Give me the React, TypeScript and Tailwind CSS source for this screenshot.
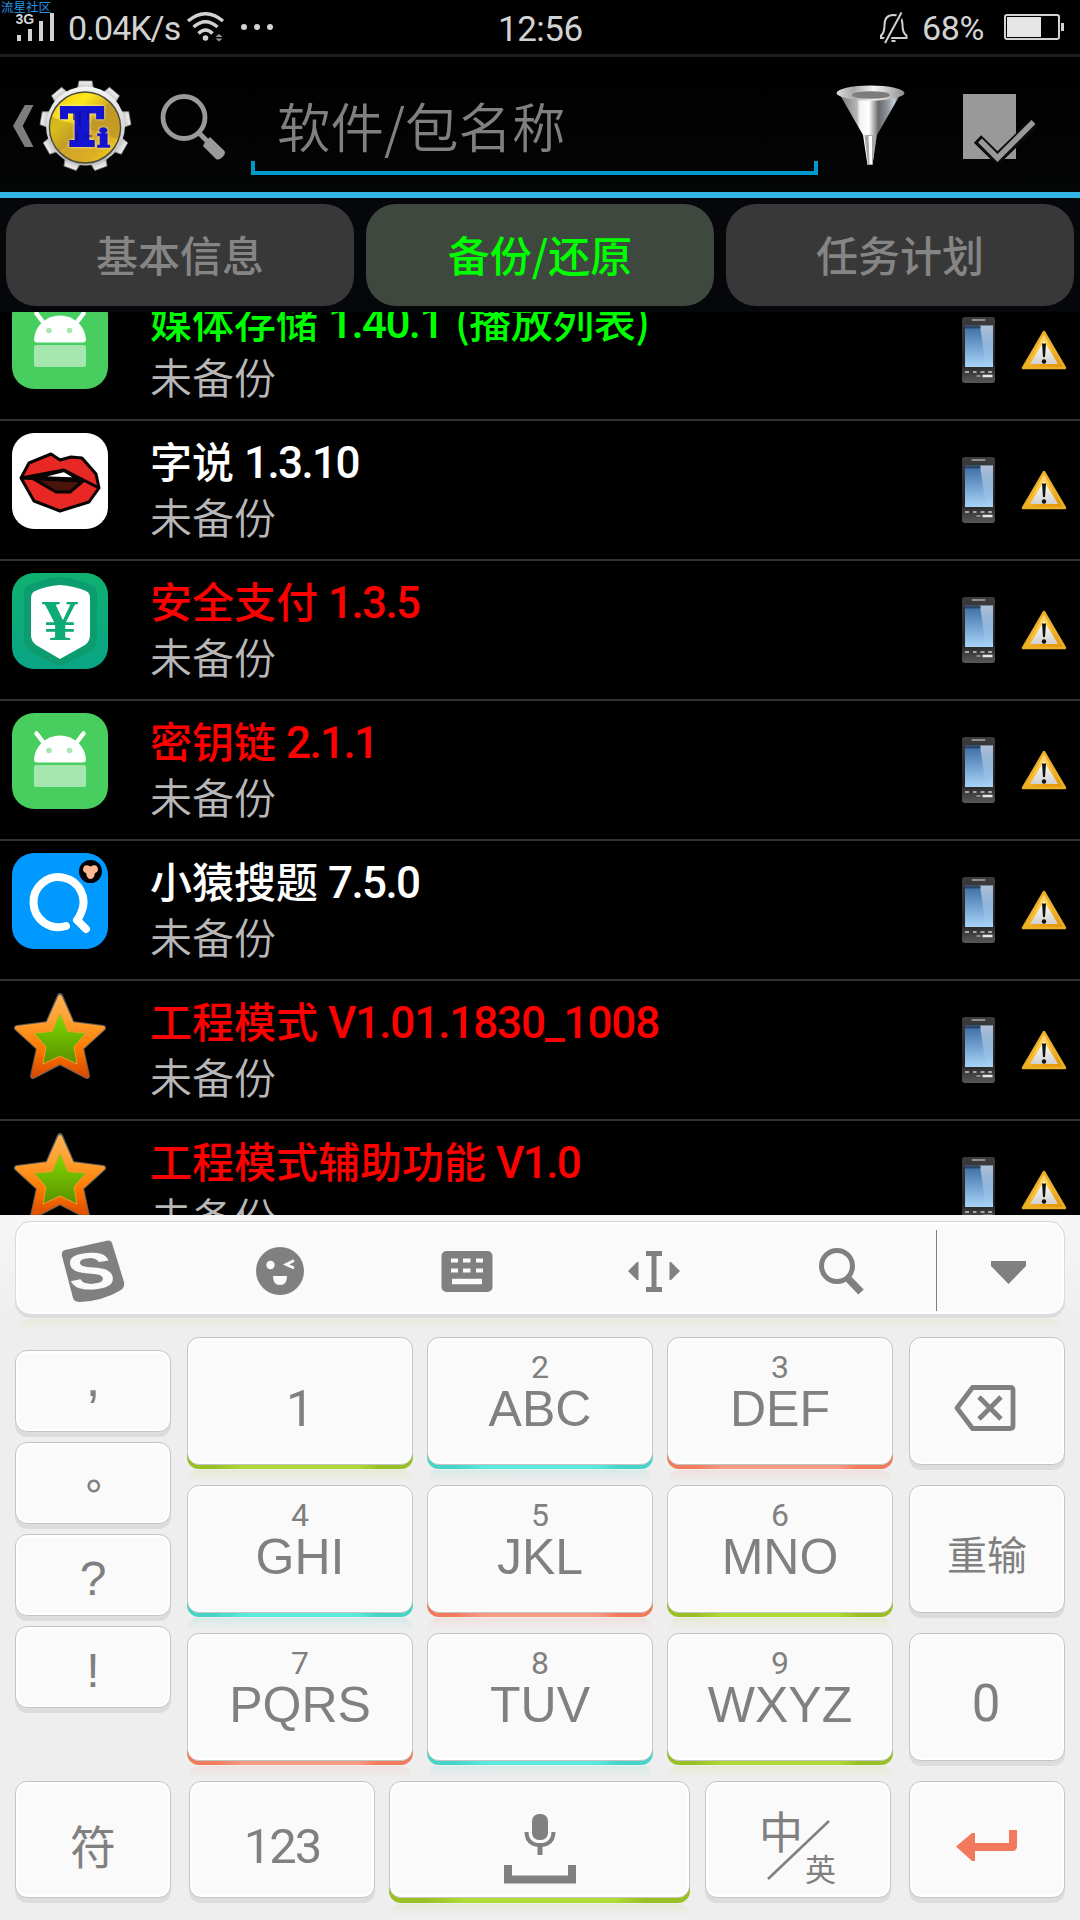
import type { ReactNode } from "react";
import clsx from "clsx";

type Accent = "green" | "teal" | "coral" | "none";
type IconName = "android" | "lips" | "pay" | "search" | "star";

interface AppEntry {
  name: string;
  version: string;
  note?: string;
  color: string;
  icon: IconName;
}

const apps: AppEntry[] = [
  { name: "媒体存储", version: "1.40.1", note: "(播放列表)", color: "text-[#00ff00]", icon: "android" },
  { name: "字说", version: "1.3.10", color: "text-white", icon: "lips" },
  { name: "安全支付", version: "1.3.5", color: "text-[#ff0000]", icon: "pay" },
  { name: "密钥链", version: "2.1.1", color: "text-[#ff0000]", icon: "android" },
  { name: "小猿搜题", version: "7.5.0", color: "text-white", icon: "search" },
  { name: "工程模式", version: "V1.01.1830_1008", color: "text-[#ff0000]", icon: "star" },
  { name: "工程模式辅助功能", version: "V1.0", color: "text-[#ff0000]", icon: "star" },
];

const letterKeys: { digit: string; label: string; accent: Accent }[] = [
  { digit: "", label: "1", accent: "green" },
  { digit: "2", label: "ABC", accent: "teal" },
  { digit: "3", label: "DEF", accent: "coral" },
  { digit: "4", label: "GHI", accent: "teal" },
  { digit: "5", label: "JKL", accent: "coral" },
  { digit: "6", label: "MNO", accent: "green" },
  { digit: "7", label: "PQRS", accent: "coral" },
  { digit: "8", label: "TUV", accent: "teal" },
  { digit: "9", label: "WXYZ", accent: "green" },
];

const edgeClass: Record<Accent, string> = {
  green: "bg-[linear-gradient(90deg,#98c023_12%,#b0da35_25%,#b0da35_75%,#98c023_85%)]",
  teal: "bg-[linear-gradient(90deg,#46d4c6_12%,#58eadb_25%,#58eadb_75%,#46d4c6_85%)]",
  coral: "bg-[linear-gradient(90deg,#f27a5c_12%,#f99a82_25%,#f99a82_75%,#f27a5c_85%)]",
  none: "bg-[linear-gradient(#dcdcdc,#dcdcdc)]",
};

const glowClass: Record<Accent, string> = {
  green: "from-[#e6ead5]",
  teal: "from-[#d7eae7]",
  coral: "from-[#efe1dd]",
  none: "from-transparent",
};

function StatusBar() {
  return (
    <div className="relative flex h-[57px] items-start border-b-[3px] border-[#1c1c1c] bg-black text-[#d2d2d2]">
      <span className="absolute left-px top-0 text-[12.5px] leading-[13px] text-[#2b93e6]">
        流星社区
      </span>
      <svg className="ml-4 mt-3 h-[30px] w-10 shrink-0" viewBox="0 0 40 30" fill="#d2d2d2">
        <text x="-0.5" y="11.5" fontSize="14" fontWeight="700" fontFamily="Liberation Sans, sans-serif">
          3G
        </text>
        <rect x="1" y="23" width="4" height="6" />
        <rect x="12" y="17" width="4" height="12" />
        <rect x="23" y="9" width="4" height="20" />
        <rect x="34" y="1" width="4" height="28" />
      </svg>
      <span className="ml-3 mt-2 w-[116px] whitespace-nowrap font-['Roboto',sans-serif] text-[34px] font-normal leading-10 tracking-[-1px]">
        0.04K/s
      </span>
      <svg className="ml-[2px] mt-3 h-[30px] w-[40px]" viewBox="0 0 40 30" fill="none" stroke="#d2d2d2" strokeWidth="3.4">
        <path d="M2 9 Q19.500 -5.500 37 9" />
        <path d="M7.500 15 Q19.500 4.500 31.500 15" />
        <path d="M12.500 21.500 Q19.500 14.500 26.500 21.500" />
        <circle cx="19.500" cy="26" r="2.800" fill="#d2d2d2" stroke="none" />
        <path d="M29.500 25 l3.500 -3 3.500 3z M29.500 26.500 l3.500 3 3.500 -3z" fill="#999" stroke="none" />
      </svg>
      <svg className="ml-[14px] mt-6 h-[6px] w-[34px]" viewBox="0 0 34 6" fill="#d2d2d2">
        <circle cx="4" cy="3" r="3" />
        <circle cx="17" cy="3" r="3" />
        <circle cx="30" cy="3" r="3" />
      </svg>
      <span className="ml-[224px] mt-[10px] w-[89px] whitespace-nowrap font-['Roboto',sans-serif] text-[35px] font-normal leading-10 tracking-[-0.5px]">
        12:56
      </span>
      <svg className="ml-[292px] mt-3 h-8 w-[30px]" viewBox="0 0 30 32" fill="none" stroke="#d2d2d2" strokeWidth="2">
        <path d="M2 26 H27.500 V23.500 Q23.500 21 23.500 13 Q23.500 3 14.500 3 Q5.500 3 5.500 13 Q5.500 21 2 23.500z" />
        <path d="M22.500 0.500 L6 31" stroke="#000" strokeWidth="6" />
        <path d="M22.500 0.500 L6 31" />
        <path d="M12.500 29 h4" />
      </svg>
      <span className="ml-[13px] mt-2 w-[69px] whitespace-nowrap font-['Roboto',sans-serif] text-[34px] font-normal leading-10 tracking-[-0.4px]">
        68%
      </span>
      <svg className="ml-[13px] mt-[14px] h-[26px] w-[62px]" viewBox="0 0 62 26">
        <rect x="1" y="1" width="54" height="24" rx="2" fill="none" stroke="#d2d2d2" strokeWidth="2" />
        <rect x="3" y="3" width="34" height="20" fill="#e6e6e6" />
        <rect x="57" y="9" width="3" height="8" fill="#d2d2d2" />
      </svg>
    </div>
  );
}

function GearLogo() {
  const teeth = [0, 40, 80, 120, 160, 200, 240, 280, 320];
  return (
    <svg className="h-[92px] w-[94px]" viewBox="0 0 94 92">
      <defs>
        <linearGradient id="gold" x1="0" y1="0" x2="1" y2="1">
          <stop offset="0" stopColor="#e9c21c" />
          <stop offset="0.300" stopColor="#ffe818" />
          <stop offset="0.520" stopColor="#d0a42a" />
          <stop offset="0.750" stopColor="#dcae22" />
          <stop offset="1" stopColor="#ffe21e" />
        </linearGradient>
        <linearGradient id="steel" x1="0" y1="0" x2="0" y2="1">
          <stop offset="0" stopColor="#f4f4f4" />
          <stop offset="1" stopColor="#bcbcbc" />
        </linearGradient>
      </defs>
      <g fill="url(#steel)" stroke="#8a8a8a" strokeWidth="0.800">
        {teeth.map((angle) => (
          <path key={angle} d="M39.500 10 L41 2 H54 L55.500 10z" transform={`rotate(${angle} 47.500 47)`} />
        ))}
      </g>
      <circle cx="47.500" cy="47" r="39.500" fill="url(#steel)" />
      <circle cx="47" cy="48.500" r="35.500" fill="url(#gold)" stroke="#4a4a3a" strokeWidth="1.500" />
      <path d="M47 48.500 L22 73 A35 35 0 0 1 14 38z" fill="#a98522" opacity="0.450" />
      <path d="M47 48.500 L71 24 A35 35 0 0 1 80 60z" fill="#b08c22" opacity="0.500" />
      <g
        className="drop-shadow-[0_0_1.5px_#fff6cc]"
        fill="#1414cf"
        stroke="#1414cf"
        strokeWidth="4"
        fontFamily="DejaVu Serif, serif"
        fontWeight="700"
      >
        <text x="23.500" y="66" fontSize="50" textLength="41" lengthAdjust="spacingAndGlyphs">
          T
        </text>
        <text x="59" y="67.500" fontSize="25" strokeWidth="1.500" textLength="13" lengthAdjust="spacingAndGlyphs">
          i
        </text>
      </g>
      <path d="M36 32 v9 M42 32 v15 M50 32 v9 M46 57 h8 M39 52 v10" stroke="#0a0a80" strokeWidth="1.200" fill="none" />
    </svg>
  );
}

function Header() {
  return (
    <div className="flex h-[141px] items-start border-b-[6px] border-[#33b5e5] bg-[linear-gradient(#000,#040505)]">
      <svg className="ml-3 mt-[47px] h-[44px] w-[23px]" viewBox="0 0 23 44" fill="#7d7d7d">
        <path d="M12.800 1 H21.500 L10.700 22 L21.500 43 H12.800 L1 22z" />
      </svg>
      <div className="ml-[3px] mt-[22px]">
        <GearLogo />
      </div>
      <svg className="ml-[28px] mt-[37px] h-[68px] w-[68px]" viewBox="0 0 68 68" fill="none" stroke="#9a9a9a">
        <circle cx="24" cy="23.500" r="21" strokeWidth="4.800" />
        <path d="M39 39 L47 47" strokeWidth="5" />
        <path d="M45 48 L50 43 L64.500 57 Q66 60 62 63.500 Q59 66.500 56 65 L43 52z" fill="#9a9a9a" stroke="none" />
      </svg>
      <div className="ml-[23px] mt-[28px] h-[90px] w-[567px] text-[#808080]">
        <div className="h-[76px] pl-[26px] text-[53.5px] font-[350] leading-[80px]">软件/包名称</div>
        <div className="h-[14px] border-x-4 border-b-4 border-[#0099cc]" />
      </div>
      <svg className="ml-[17px] mt-[27px] h-[82px] w-[72px]" viewBox="0 0 72 82">
        <defs>
          <linearGradient id="cone">
            <stop offset="0" stopColor="#777" />
            <stop offset="0.280" stopColor="#b5b5b5" />
            <stop offset="0.330" stopColor="#f2f2f2" />
            <stop offset="0.480" stopColor="#fff" />
            <stop offset="0.640" stopColor="#66696c" />
            <stop offset="0.800" stopColor="#93999e" />
            <stop offset="0.900" stopColor="#c4d0d8" />
            <stop offset="1" stopColor="#5b6a74" />
          </linearGradient>
          <linearGradient id="rim">
            <stop offset="0" stopColor="#ddd" />
            <stop offset="0.250" stopColor="#a9a9a9" />
            <stop offset="0.550" stopColor="#f5f5f5" />
            <stop offset="1" stopColor="#8d8d8d" />
          </linearGradient>
        </defs>
        <path d="M5 11 L28 51 L32.500 81 H37.500 L42 51 L65 11z" fill="url(#cone)" />
        <path d="M29.500 51 H41 L37.500 81 H33z" fill="#a8a8a8" />
        <path d="M33.500 52 H37 V80 H34.500z" fill="#fff" />
        <ellipse cx="35.500" cy="9" rx="34" ry="7.500" fill="url(#rim)" />
        <ellipse cx="36" cy="11" rx="19" ry="3.800" fill="#7c7c7c" />
      </svg>
      <svg className="ml-[55px] mt-[36px] h-[70px] w-[76px]" viewBox="0 0 76 70" fill="none">
        <rect x="1" y="1" width="53" height="65" fill="#999" />
        <path d="M15.500 46 L35.500 65.500 L72 30" stroke="#0b0b0b" strokeWidth="10.500" strokeLinecap="butt" />
        <path d="M18 47.500 L35.500 65 L71.500 29" stroke="#999" strokeWidth="5.500" />
      </svg>
    </div>
  );
}

function Tabs() {
  const tabs = [
    { label: "基本信息", cls: "bg-[#383838] text-[#858585]" },
    { label: "备份/还原", cls: "bg-[#3e483e] text-[#00ff00]" },
    { label: "任务计划", cls: "bg-[#383838] text-[#858585]" },
  ];
  return (
    <div className="grid h-[114px] grid-cols-3 gap-3 bg-[#05070a] p-[6px]">
      {tabs.map((tab) => (
        <div
          key={tab.label}
          className={clsx("flex items-center justify-center rounded-[30px] pb-[3px] text-[42px] font-medium", tab.cls)}
        >
          {tab.label}
        </div>
      ))}
    </div>
  );
}

function AppIcon({ name }: { name: IconName }) {
  if (name === "star") {
    return (
      <svg className="h-24 w-24" viewBox="0 0 96 96">
        <defs>
          <linearGradient id="starRim" x1="0" y1="0" x2="0" y2="1">
            <stop offset="0" stopColor="#ffb050" />
            <stop offset="0.300" stopColor="#ffa030" />
            <stop offset="0.650" stopColor="#ff7a00" />
            <stop offset="1" stopColor="#d94a00" />
          </linearGradient>
          <linearGradient id="starFill" x1="0" y1="0" x2="0" y2="1">
            <stop offset="0" stopColor="#80dc00" />
            <stop offset="1" stopColor="#5a9000" />
          </linearGradient>
        </defs>
        <path
          d="M48 3 L60 31 L91 35 L69 55 L75 83 L48 69 L21 83 L27 55 L5 35 L36 31z"
          fill="none"
          stroke="#5c5c5c"
          strokeWidth="6"
          strokeLinejoin="round"
        />
        <path
          d="M48 4 L60 31 L91 35 L69 55 L75 83 L48 69 L21 83 L27 55 L5 35 L36 31z"
          fill="url(#starRim)"
          stroke="url(#starRim)"
          strokeWidth="4"
          strokeLinejoin="round"
        />
        <path
          d="M48 20 L56 38.500 L74 40 L62 54 L65 71 L48 63 L31 71 L34 54 L22 40 L40 38.500z"
          fill="url(#starFill)"
          stroke="#e8a030"
          strokeWidth="1"
        />
      </svg>
    );
  }
  if (name === "lips") {
    return (
      <svg className="h-24 w-24" viewBox="0 0 96 96">
        <rect width="96" height="96" rx="22" fill="#fff" />
        <g stroke="#080404" strokeWidth="3" strokeLinejoin="round">
          <path d="M9 45 L17 30 L39 21 L48 27 L59 24 L70 25 L84 41 L87 55 L77 69 L48 78 L22 68z" fill="#e82824" />
          <path d="M20 45 L71 48 L58 59 H44z" fill="#4a140c" />
          <path d="M25 44.500 L52 37.500 L66 46z" fill="#fff" />
          <path d="M9 45 L52 37 L87 55 M9 45 L71 48" fill="none" />
        </g>
      </svg>
    );
  }
  if (name === "pay") {
    return (
      <svg className="h-24 w-24" viewBox="0 0 96 96">
        <defs>
          <linearGradient id="payBg" x1="0" y1="0" x2="0" y2="1">
            <stop offset="0" stopColor="#10b070" />
            <stop offset="1" stopColor="#0aa586" />
          </linearGradient>
        </defs>
        <rect width="96" height="96" rx="22" fill="url(#payBg)" />
        <path d="M48 4 Q66 6 80 12 Q85 14 85 20 V66 Q85 74 78 79 L48 93 L18 79 Q12 74 12 66 V20 Q12 14 17 12 Q30 6 48 4z" fill="#0c9c70" />
        <path d="M48 12 Q62 13 74 18 Q78 20 78 25 V62 Q78 68 73 72 L48 86 L24 72 Q19 68 19 62 V25 Q19 20 23 18 Q34 13 48 12z" fill="#fff" />
        <text
          x="30"
          y="66.500"
          fontSize="58"
          fontWeight="700"
          fill="#0eaa78"
          fontFamily="Liberation Serif, serif"
          textLength="36"
          lengthAdjust="spacingAndGlyphs"
        >
          ¥
        </text>
      </svg>
    );
  }
  if (name === "search") {
    return (
      <svg className="h-24 w-24" viewBox="0 0 96 96">
        <rect width="96" height="96" rx="22" fill="#0099ff" />
        <path
          d="M54 73 A25 25 0 1 1 69 60 Q67 65 65 67 L74 76"
          fill="none"
          stroke="#fff"
          strokeWidth="8"
          strokeLinecap="round"
          strokeLinejoin="round"
        />
        <circle cx="78.500" cy="18.500" r="11.500" fill="#000" />
        <path d="M78.500 13.500 Q85 10 86 16 Q86 19 83 20 Q82 26 78.500 26 Q75 26 74 20 Q71 19 71 16 Q72 10 78.500 13.500z" fill="#ffb890" />
      </svg>
    );
  }
  return (
    <svg className="h-24 w-24" viewBox="0 0 96 96">
      <rect width="96" height="96" rx="22" fill="#48cd5f" />
      <path d="M24.500 20.500 L31 29 M71.500 20.500 L65 29" stroke="#fff" strokeWidth="4.500" strokeLinecap="round" />
      <path d="M22 46 Q23 36 30 29.500 Q38 22.500 48 22.500 Q58 22.500 66 29.500 Q73 36 74 46 Q74 49.500 71 49.500 H25 Q22 49.500 22 46z" fill="#fff" />
      <circle cx="37" cy="37.500" r="2.800" fill="#a4e7b0" />
      <circle cx="57.500" cy="37.500" r="2.800" fill="#a4e7b0" />
      <rect x="22" y="52" width="52" height="22" rx="2" fill="#a4e7b0" />
    </svg>
  );
}

function PhoneIcon() {
  return (
    <svg className="h-[66px] w-[33px]" viewBox="0 0 33 66">
      <defs>
        <linearGradient id="screen" x1="0" y1="0" x2="0" y2="1">
          <stop offset="0" stopColor="#3a6ca4" />
          <stop offset="1" stopColor="#a8d4f8" />
        </linearGradient>
        <linearGradient id="phoneBody" x1="0" y1="0" x2="0" y2="1">
          <stop offset="0" stopColor="#3c3c3c" />
          <stop offset="0.700" stopColor="#202020" />
          <stop offset="1" stopColor="#585858" />
        </linearGradient>
        <linearGradient id="glare" x1="0" y1="0" x2="0" y2="1">
          <stop offset="0" stopColor="#c8d0de" stopOpacity="0.850" />
          <stop offset="1" stopColor="#a8d4f8" stopOpacity="0.100" />
        </linearGradient>
      </defs>
      <rect width="33" height="66" rx="3" fill="url(#phoneBody)" />
      <rect x="9.500" y="2" width="14" height="2" rx="1" fill="#8c8c8c" />
      <rect x="3" y="8.500" width="28" height="41.500" fill="url(#screen)" />
      <path d="M18 8.500 H31 V50 H24z" fill="url(#glare)" />
      <rect x="3" y="9" width="15.500" height="2.500" fill="#2a4768" />
      <path d="M3 55 h4 M11 55 h3.500 M18.500 55 h4 M26 55 h4" stroke="#a5a5a5" strokeWidth="2" />
      <path d="M20.500 59 h10" stroke="#e8e8e8" strokeWidth="2.500" />
      <path d="M14.500 59 h4" stroke="#8a8a8a" strokeWidth="2" />
    </svg>
  );
}

function WarningIcon() {
  return (
    <svg className="h-[42px] w-[48px]" viewBox="0 0 48 42">
      <defs>
        <linearGradient id="warn" x1="0" y1="0" x2="0.500" y2="1">
          <stop offset="0" stopColor="#ffeeb0" />
          <stop offset="0.550" stopColor="#fdc63a" />
          <stop offset="1" stopColor="#e79a08" />
        </linearGradient>
        <linearGradient id="warnInner" x1="0" y1="0" x2="0" y2="1">
          <stop offset="0" stopColor="#fff" />
          <stop offset="1" stopColor="#d2d2d2" />
        </linearGradient>
      </defs>
      <path d="M24 4 L45 40 H3z" fill="url(#warn)" stroke="#eaae28" strokeWidth="2.500" strokeLinejoin="round" />
      <path d="M24 13 L38 36 H10z" fill="url(#warnInner)" />
      <path d="M22 15.500 H26 L25 29 H23z" fill="#111" />
      <circle cx="24" cy="33.500" r="2.200" fill="#111" />
    </svg>
  );
}

function AppRow({ app }: { app: AppEntry }) {
  return (
    <div className="flex h-[140px] shrink-0 items-start border-b-2 border-[#323335] px-3">
      <div className="mt-3">
        <AppIcon name={app.icon} />
      </div>
      <div className="ml-[42px] mt-[11px] flex-1 whitespace-nowrap text-[42px] leading-[56px]">
        <div className={clsx("flex h-14 items-baseline font-medium", app.color)}>
          <span>{app.name}</span>
          <span
            className={clsx(
              "ml-[10px] font-['Roboto',sans-serif] text-[44px]",
              app.version.length > 8 ? "tracking-[-1.1px]" : "tracking-[-1.6px]",
            )}
          >
            {app.version}
          </span>
          {app.note && <span className="ml-[12px] tracking-[-0.5px]">{app.note}</span>}
        </div>
        <div className="font-[350] text-[#b8b8b8]">未备份</div>
      </div>
      <div className="mt-9 flex gap-[25px]">
        <PhoneIcon />
        <div className="mt-[11px]">
          <WarningIcon />
        </div>
      </div>
    </div>
  );
}

interface KeyProps {
  accent?: Accent;
  className: string;
  faceClass: string;
  children: ReactNode;
}

function Key({ accent = "none", className, faceClass, children }: KeyProps) {
  return (
    <div className={clsx("relative rounded-[12px] bg-[length:100%_50%] bg-bottom bg-no-repeat", edgeClass[accent], className)}>
      <div
        className={clsx(
          "flex flex-col items-center rounded-[12px] border border-[#c4c4c4] bg-[#fafafa] text-[#808080] shadow-[inset_0_0_0_2px_#fff]",
          faceClass,
        )}
      >
        {children}
      </div>
      {accent !== "none" && (
        <div className={clsx("absolute inset-x-px top-full mt-px h-3 rounded-t-[10px] bg-linear-to-b to-[#eee]", glowClass[accent])} />
      )}
    </div>
  );
}

function Toolbar() {
  return (
    <div className="h-[97px] rounded-[16px] bg-[#dcdcdc]">
      <div className="flex h-[94px] items-center rounded-[16px] border border-[#dadada] bg-[#fafafa] pl-[45px] pt-[5px] shadow-[inset_0_0_0_2px_#fff]">
        <div className="flex gap-[123px]">
          <svg className="h-16 w-16" viewBox="0 0 64 64">
            <path
              d="M4 11 L47 1.500 Q50 1 51 4 L63 43 Q64 48 60 51 Q42 62 19 63 Q13 63 12 59 L1 17 Q0 12 4 11z"
              fill="#808080"
            />
            <text
              x="0"
              y="0"
              transform="translate(9.500 51.500) rotate(-4) skewX(6) scale(1.350 1)"
              fontSize="52"
              fontWeight="700"
              fill="#fafafa"
              fontFamily="Liberation Sans, sans-serif"
            >
              S
            </text>
          </svg>
          <svg className="h-16 w-16" viewBox="0 0 64 64">
            <circle cx="32" cy="32" r="24" fill="#808080" />
            <circle cx="22.500" cy="26" r="4.200" fill="#fafafa" />
            <path d="M46 21.500 L38 25.500 L46 29" stroke="#fafafa" strokeWidth="2.600" fill="none" />
            <path d="M25 37 H39 Q39 46 32 46 Q25 46 25 37z" fill="#fafafa" />
          </svg>
          <svg className="h-16 w-16" viewBox="0 0 64 64">
            <rect x="6.500" y="12" width="51" height="41" rx="5" fill="#808080" />
            <path d="M16 21.500 h7 M28 21.500 h7.500 M41 21.500 h7 M16 31.500 h7 M28 31.500 h7.500 M41 31.500 h7" stroke="#fafafa" strokeWidth="4" />
            <path d="M17 42.500 h30" stroke="#fafafa" strokeWidth="5.500" />
          </svg>
          <svg className="h-16 w-16" viewBox="0 0 64 64" fill="#808080">
            <path d="M24 12 h16 v5 h-5.500 v31 h5.500 v5 h-16 v-5 h5.500 v-31 h-5.500z" />
            <path d="M6 32 L15 23 h1.500 v18 h-1.500z M58 32 L49 23 h-1.500 v18 h1.500z" />
          </svg>
          <svg className="h-16 w-16" viewBox="0 0 64 64" fill="none" stroke="#808080">
            <circle cx="28" cy="27" r="15.500" strokeWidth="5" />
            <path d="M39.500 40 L52 53" strokeWidth="7.500" />
          </svg>
        </div>
        <div className="ml-[63px] h-[81px] w-px bg-[#808080]" />
        <svg className="ml-[54px] mt-[4px] h-6 w-[35px]" viewBox="0 0 35 24" fill="#808080">
          <path d="M0 0 H35 V5 L17.500 23 L0 5z" />
        </svg>
      </div>
      <div className="mx-1 mt-1 h-3 rounded-t-[10px] bg-linear-to-b from-[#e8ebdb] to-[#eee]" />
    </div>
  );
}

function Keyboard() {
  return (
    <div className="h-[705px] bg-[linear-gradient(#f6f6f6,#eee_110px)] px-[15px] pt-[6px] font-['Liberation_Sans','Noto_Sans_CJK_SC',sans-serif]">
      <Toolbar />
      <div className="mt-[19px] flex items-start gap-4">
        <div className="flex w-[156px] flex-col gap-[5px] pt-[13px] text-[48px]">
          <Key className="h-[87px]" faceClass="h-[82px]">
            <span className="text-[54px] leading-[52px]">,</span>
          </Key>
          <Key className="h-[87px]" faceClass="h-[82px]">
            <span className="pl-[26px] font-['Noto_Sans_CJK_SC',sans-serif] text-[40px] font-medium leading-[59px]">。</span>
          </Key>
          <Key className="h-[87px]" faceClass="h-[82px]">
            <span className="leading-[88px]">?</span>
          </Key>
          <Key className="h-[87px]" faceClass="h-[82px]">
            <span className="leading-[88px]">!</span>
          </Key>
        </div>
        <div className="grid w-[706px] grid-cols-3 gap-x-[14px] gap-y-4">
          {letterKeys.map((key) => (
            <Key key={key.label} accent={key.accent} className="h-[132px]" faceClass="h-[128px]">
              <span className="mt-[10px] h-9 font-['Roboto',sans-serif] text-[32px] leading-[38px]">{key.digit}</span>
              <span className={clsx("text-[50px] leading-[50px]", key.label === "1" && "font-['Roboto',sans-serif]")}>
                {key.label}
              </span>
            </Key>
          ))}
        </div>
        <div className="flex w-[156px] flex-col gap-[15px]">
          <Key className="h-[133px]" faceClass="h-[128px]">
            <svg className="-ml-1 mt-[45px] h-[50px] w-[64px]" viewBox="0 0 64 50" fill="none" stroke="#808080" strokeWidth="4.800">
              <path d="M4 25 L19.500 4.500 H57 Q60 4.500 60 7 V43 Q60 45.500 57 45.500 H19.500z" strokeLinejoin="round" />
              <path d="M26 14 L48 36 M48 14 L26 36" />
            </svg>
          </Key>
          <Key className="h-[133px]" faceClass="h-[128px]">
            <span className="font-['Noto_Sans_CJK_SC',sans-serif] text-[40px] leading-[134px]">重输</span>
          </Key>
          <Key className="h-[133px]" faceClass="h-[128px]">
            <span className="-ml-0.5 font-['Roboto',sans-serif] text-[51px] leading-[140px]">0</span>
          </Key>
        </div>
      </div>
      <div className="mt-[15px] flex">
        <Key className="h-[122px] w-[156px]" faceClass="h-[117px]">
          <span className="font-['Noto_Sans_CJK_SC',sans-serif] text-[46px] leading-[124px]">符</span>
        </Key>
        <Key className="ml-[18px] h-[122px] w-[186px]" faceClass="h-[117px]">
          <span className="font-['Roboto',sans-serif] text-[49px] leading-[129px] tracking-[-2px]">123</span>
        </Key>
        <Key accent="green" className="ml-[14px] h-[122px] w-[301px]" faceClass="h-[117px]">
          <svg className="mt-[30px] h-[72px] w-[76px]" viewBox="0 0 76 72" fill="none" stroke="#808080">
            <rect x="30" y="2" width="16" height="26" rx="7" fill="#808080" stroke="none" />
            <path d="M24.500 20 Q25 33 38 33 Q51 33 51.500 20" strokeWidth="4" />
            <path d="M38 33 V43" strokeWidth="5" />
            <path d="M6 53 V67.500 H70 V53" strokeWidth="8" />
          </svg>
        </Key>
        <Key className="ml-[15px] h-[122px] w-[186px]" faceClass="h-[117px]">
          <svg
            className="mt-[20px] h-[90px] w-[90px]"
            viewBox="0 0 90 90"
            fill="#808080"
            fontFamily="Noto Sans CJK SC, sans-serif"
          >
            <text x="6" y="47" fontSize="44">
              中
            </text>
            <text x="52" y="79" fontSize="31">
              英
            </text>
            <path d="M15 77 L76 19" stroke="#808080" strokeWidth="2.500" />
          </svg>
        </Key>
        <Key className="ml-[18px] h-[122px] w-[156px]" faceClass="h-[117px]">
          <svg className="mt-[48px] h-8 w-[62px]" viewBox="0 0 62 32" fill="#f27a5c">
            <path d="M0 16.500 L16 3 H19 V13 H53 V0 H61 V16 Q61 21 56 21 H19 V31 H16z" />
          </svg>
        </Key>
      </div>
    </div>
  );
}

export default function App() {
  return (
    <div className="h-[1920px] w-[1080px] overflow-hidden bg-black font-['Noto_Sans_CJK_SC',sans-serif]">
      <StatusBar />
      <Header />
      <Tabs />
      <div className="h-[903px] overflow-hidden">
        <div className="-mt-[31px] flex flex-col">
          {apps.map((app) => (
            <AppRow key={app.name} app={app} />
          ))}
        </div>
      </div>
      <Keyboard />
    </div>
  );
}
